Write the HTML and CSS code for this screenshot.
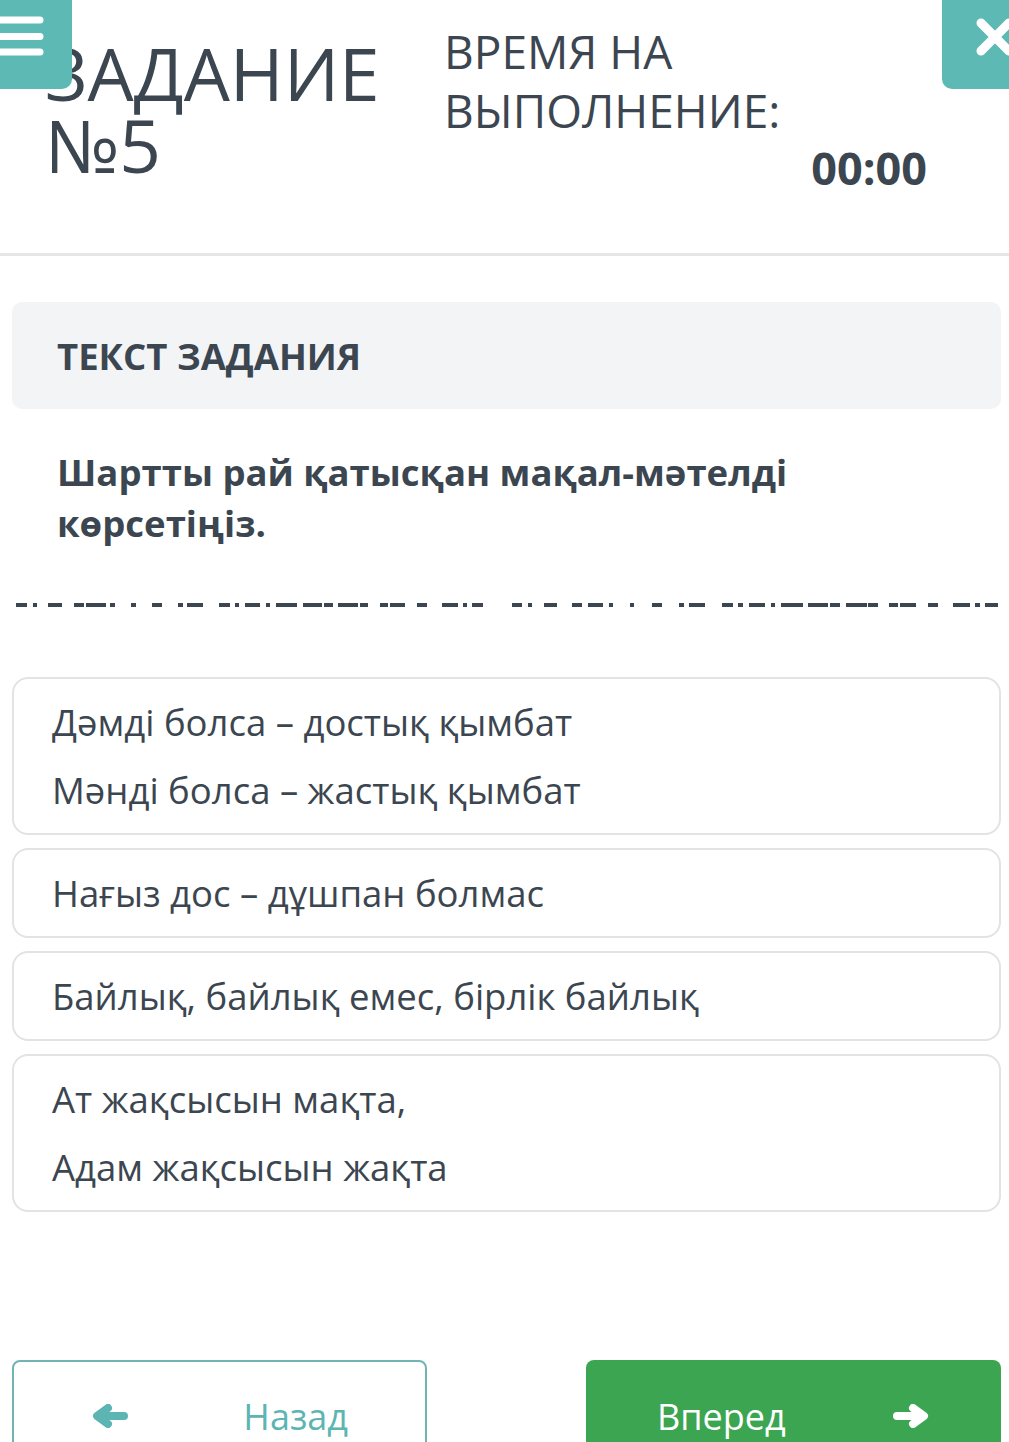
FILE: index.html
```html
<!DOCTYPE html>
<html lang="ru">
<head>
<meta charset="utf-8">
<title>Задание №5</title>
<link rel="stylesheet" href="styles.css">
</head>
<body>
<header class="top">
  <a class="menu-btn" href="#" aria-label="Меню">
    <svg width="50" height="60" viewBox="0 0 50 60">
      <path d="M-5 20 H40 M-5 36.5 H40 M-5 52 H40" stroke="#ffffff" stroke-width="7" stroke-linecap="round" fill="none"/>
    </svg>
  </a>
  <div class="title"><div>ЗАДАНИЕ</div><div>№5</div></div>
  <div class="timer">
    <div class="timer-label">ВРЕМЯ НА<br>ВЫПОЛНЕНИЕ:</div>
    <div class="timer-value">00:00</div>
  </div>
  <a class="close-btn" href="#" aria-label="Закрыть">
    <svg width="67" height="89" viewBox="0 0 67 89">
      <path d="M39 23 L67 51 M67 23 L39 51" stroke="#ffffff" stroke-width="9" stroke-linecap="round" fill="none"/>
    </svg>
  </a>
</header>

<main class="main">
  <div class="task-head">ТЕКСТ ЗАДАНИЯ</div>
  <div class="question">Шартты рай қатысқан мақал-мәтелді<br>көрсетіңіз.</div>
</main>

<div class="dashes">
  <svg width="1009" height="4" viewBox="0 0 1009 4">
    <g fill="#3c4650">
      <rect x="16" y="0" width="11" height="4"/><rect x="33" y="0" width="4" height="4"/><rect x="48" y="0" width="14" height="4"/><rect x="74" y="0" width="10" height="4"/><rect x="86" y="0" width="20" height="4"/><rect x="110" y="0" width="5" height="4"/><rect x="131" y="0" width="5" height="4"/><rect x="152" y="0" width="10" height="4"/><rect x="178" y="0" width="5" height="4"/><rect x="187" y="0" width="16" height="4"/><rect x="219" y="0" width="11" height="4"/><rect x="235" y="0" width="4" height="4"/><rect x="245" y="0" width="15" height="4"/><rect x="266" y="0" width="4" height="4"/><rect x="276" y="0" width="21" height="4"/><rect x="303" y="0" width="19" height="4"/><rect x="324" y="0" width="9" height="4"/><rect x="338" y="0" width="20" height="4"/><rect x="360" y="0" width="8" height="4"/><rect x="380" y="0" width="8" height="4"/><rect x="390" y="0" width="15" height="4"/><rect x="417" y="0" width="10" height="4"/><rect x="442" y="0" width="16" height="4"/><rect x="463" y="0" width="4" height="4"/><rect x="472" y="0" width="11" height="4"/>
      <rect x="512" y="0" width="10" height="4"/><rect x="528" y="0" width="4" height="4"/><rect x="544" y="0" width="13" height="4"/><rect x="572" y="0" width="10" height="4"/><rect x="588" y="0" width="15" height="4"/><rect x="609" y="0" width="4" height="4"/><rect x="630" y="0" width="4" height="4"/><rect x="652" y="0" width="10" height="4"/><rect x="679" y="0" width="5" height="4"/><rect x="689" y="0" width="16" height="4"/><rect x="722" y="0" width="11" height="4"/><rect x="738" y="0" width="5" height="4"/><rect x="749" y="0" width="16" height="4"/><rect x="771" y="0" width="4" height="4"/><rect x="781" y="0" width="22" height="4"/><rect x="808" y="0" width="20" height="4"/><rect x="830" y="0" width="10" height="4"/><rect x="846" y="0" width="21" height="4"/><rect x="868" y="0" width="10" height="4"/><rect x="889" y="0" width="9" height="4"/><rect x="900" y="0" width="16" height="4"/><rect x="928" y="0" width="10" height="4"/><rect x="953" y="0" width="17" height="4"/><rect x="975" y="0" width="5" height="4"/><rect x="985" y="0" width="13" height="4"/>
    </g>
  </svg>
</div>

<section class="main options">
  <div class="option"><p>Дәмді болса – достық қымбат</p><p>Мәнді болса – жастық қымбат</p></div>
  <div class="option"><p>Нағыз дос – дұшпан болмас</p></div>
  <div class="option"><p>Байлық, байлық емес, бірлік байлық</p></div>
  <div class="option"><p>Ат жақсысын мақта,</p><p>Адам жақсысын жақта</p></div>
</section>

<nav class="main nav">
  <a class="btn btn-back" href="#">
    <svg width="36" height="24" viewBox="0 0 36 24"><path d="M32 12 H7 M16 4 L5 12 L16 20" stroke="currentColor" stroke-width="8" stroke-linecap="round" stroke-linejoin="round" fill="none"/></svg>
    <span>Назад</span>
  </a>
  <a class="btn btn-next" href="#">
    <span>Вперед</span>
    <svg width="37" height="24" viewBox="0 0 37 24"><path d="M4 12 H29 M20 4 L31 12 L20 20" stroke="currentColor" stroke-width="8" stroke-linecap="round" stroke-linejoin="round" fill="none"/></svg>
  </a>
</nav>
</body>
</html>
```

FILE: styles.css
```css
html, body {
  margin: 0;
  padding: 0;
  background: #ffffff;
}

body {
  font-family: "Open Sans", "Noto Sans", "DejaVu Sans", sans-serif;
  color: #3c4650;
  width: 1009px;
  overflow: hidden;
}

a {
  text-decoration: none;
}

.top {
  position: relative;
  display: flex;
  height: 253px;
  border-bottom: 3px solid #e6e6e6;
  padding: 0 82px 0 45px;
}

.menu-btn {
  position: absolute;
  left: 0;
  top: 0;
  width: 72px;
  height: 89px;
  background: #5cb9b3;
  border-bottom-right-radius: 10px;
  z-index: 2;
}

.menu-btn svg {
  display: block;
}

.close-btn {
  position: absolute;
  right: 0;
  top: 0;
  width: 67px;
  height: 89px;
  background: #5cb9b3;
  border-bottom-left-radius: 10px;
  overflow: hidden;
  z-index: 2;
}

.close-btn svg {
  display: block;
}

.title {
  width: 399px;
  padding-top: 37px;
  font-size: 73px;
  line-height: 72px;
  font-weight: 400;
}

.timer {
  flex: 1;
  display: flex;
  flex-direction: column;
  padding-top: 22px;
}

.timer-label {
  font-size: 46px;
  line-height: 59px;
  font-weight: 400;
}

.timer-value {
  align-self: flex-end;
  font-size: 45px;
  line-height: 46px;
  font-weight: 700;
  margin-top: 5px;
}

.main {
  margin: 0 8px 0 12px;
}

.task-head {
  margin-top: 46px;
  height: 107px;
  background: #f3f4f6;
  border-radius: 10px;
  display: flex;
  align-items: center;
  padding-left: 45px;
  font-size: 36.5px;
  font-weight: 700;
}

.question {
  margin-top: 38px;
  padding-left: 45px;
  font-size: 36.5px;
  line-height: 51px;
  font-weight: 700;
}

.dashes {
  margin-top: 54px;
  height: 4px;
}

.dashes svg {
  display: block;
}

.options {
  margin-top: 70px;
}

.option {
  border: 2px solid #e3e3e3;
  border-radius: 16px;
  padding: 19px 38px;
  margin-bottom: 13px;
}

.option p {
  margin: 0;
  font-size: 36.5px;
  line-height: 48px;
}

.option p + p {
  margin-top: 20px;
}

.nav {
  display: flex;
  justify-content: space-between;
  margin-top: 148px;
}

.btn {
  box-sizing: border-box;
  width: 415px;
  height: 112px;
  border-radius: 8px;
  display: flex;
  align-items: center;
  justify-content: space-between;
  font-size: 36px;
}

.btn svg {
  display: block;
}

.btn-back {
  border: 2px solid #72b4b6;
  color: #5cb5b3;
  padding: 0 77px 0 78px;
}

.btn-next {
  background: #3ba552;
  color: #ffffff;
  padding: 0 71px 0 71px;
}
```
